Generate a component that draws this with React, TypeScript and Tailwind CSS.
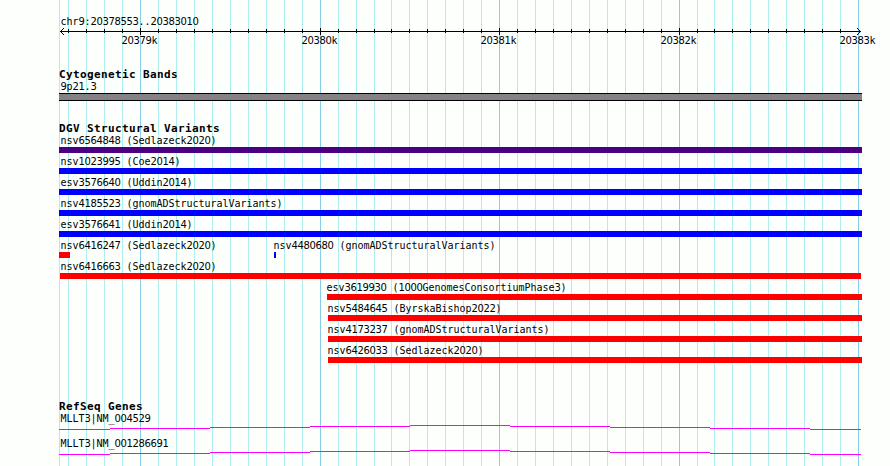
import React from "react";

const MAJOR = [140, 320, 499, 679, 858];
const MINOR = [
  68, 86, 104, 122, 158, 176, 194, 212, 230, 248, 266, 284, 302, 338, 356, 374,
  391, 409, 427, 445, 463, 481, 517, 535, 553, 571, 589, 607, 625, 643, 661,
  697, 714, 732, 750, 768, 786, 804, 822, 840,
];

type Feature = { label: string; start: number; end: number; color: string; gap?: number };

const VARIANTS: Feature[][] = [
  [{ label: "nsv6564848 (Sedlazeck2020)", start: 59, end: 862, color: "bg-[#4b0082]" }],
  [{ label: "nsv1023995 (Coe2014)", start: 59, end: 862, color: "bg-[#0000ff]" }],
  [{ label: "esv3576640 (Uddin2014)", start: 59, end: 862, color: "bg-[#0000ff]" }],
  [{ label: "nsv4185523 (gnomADStructuralVariants)", start: 59, end: 862, color: "bg-[#0000ff]" }],
  [{ label: "esv3576641 (Uddin2014)", start: 59, end: 862, color: "bg-[#0000ff]" }],
  [
    { label: "nsv6416247 (Sedlazeck2020)", start: 59, end: 70, color: "bg-[#ff0000]" },
    { label: "nsv4480680 (gnomADStructuralVariants)", start: 274, end: 276, color: "bg-[#0000ff]", gap: -0.5 },
  ],
  [{ label: "nsv6416663 (Sedlazeck2020)", start: 60, end: 861, color: "bg-[#ff0000]", gap: 0.5 }],
  [{ label: "esv3619930 (1000GenomesConsortiumPhase3)", start: 327, end: 862, color: "bg-[#ff0000]", gap: -0.5 }],
  [{ label: "nsv5484645 (ByrskaBishop2022)", start: 328, end: 862, color: "bg-[#ff0000]", gap: -0.5 }],
  [{ label: "nsv4173237 (gnomADStructuralVariants)", start: 328, end: 862, color: "bg-[#ff0000]", gap: -0.5 }],
  [{ label: "nsv6426033 (Sedlazeck2020)", start: 328, end: 862, color: "bg-[#ff0000]", gap: -0.5 }],
];

/* Digits are set in the plain sans so that zeros carry no inner dot. */
function Label({ text }: { text: string }) {
  return (
    <span className="block h-3 whitespace-pre font-['DejaVu_Sans_Mono',monospace] text-[10px] leading-3 tracking-[-0.02px] text-black">
      {text.split(/(\d+)/).map((part, i) =>
        i % 2 ? (
          <span key={i} className="font-['DejaVu_Sans',sans-serif] tracking-[-0.362px]">
            {part}
          </span>
        ) : (
          part
        ),
      )}
    </span>
  );
}

function Heading({ children }: { children: string }) {
  return (
    <h2 className="h-[13px] whitespace-pre font-['DejaVu_Sans_Mono',monospace] text-[11px] leading-[13px] font-bold tracking-[0.378px] text-black">
      {children}
    </h2>
  );
}

function GridLines() {
  return (
    <svg className="absolute inset-0" width="890" height="466" shapeRendering="crispEdges">
      {[59, ...MINOR].map((x) => (
        <rect key={x} x={x} y="0" width="1" height="466" fill="#afeeee" />
      ))}
      {MAJOR.map((x) => (
        <rect key={x} x={x} y="0" width="1" height="466" fill="#87ceeb" />
      ))}
    </svg>
  );
}

function Ruler() {
  return (
    <svg className="block" width="831" height="8" viewBox="59 28 831 8" shapeRendering="crispEdges">
      <rect x="60" y="31" width="801" height="1" />
      {MINOR.map((x) => (
        <rect key={x} x={x} y="29" width="1" height="4" />
      ))}
      {MAJOR.slice(0, 4).map((x) => (
        <rect key={x} x={x} y="28" width="1" height="7" />
      ))}
      {[1, 2, 3].map((d) => (
        <g key={d}>
          <rect x={60 + d} y={31 - d} width="1" height="1" />
          <rect x={60 + d} y={31 + d} width="1" height="1" />
          <rect x={860 - d} y={31 - d} width="1" height="1" />
          <rect x={860 - d} y={31 + d} width="1" height="1" />
        </g>
      ))}
    </svg>
  );
}

function Gene({ label }: { label: string }) {
  const steps = [59, 110, 210, 310, 410, 510, 610, 710, 810, 861];
  const rises = [4, 3, 2, 1, 0, 1, 2, 3, 4];
  return (
    <div className="h-[25px]">
      <div className="pl-[1.5px]">
        <Label text={label} />
      </div>
      <svg className="block" width="831" height="5" viewBox="59 0 831 5" shapeRendering="crispEdges">
        {rises.map((y, i) => (
          <rect key={i} x={steps[i]} y={y} width={steps[i + 1] - steps[i]} height="1" fill="#ff00ff" />
        ))}
      </svg>
    </div>
  );
}

function VariantRow({ features }: { features: Feature[] }) {
  return (
    <div className="grid h-[21px] pt-[3px]">
      {features.map((f) => (
        <div key={f.label} className="col-start-1 row-start-1" style={{ marginLeft: f.start - 59 }}>
          <div style={{ marginLeft: f.gap ?? 1.5 }}>
            <Label text={f.label} />
          </div>
          <div className={`h-[6px] ${f.color}`} style={{ width: f.end - f.start }} />
        </div>
      ))}
    </div>
  );
}

export default function App() {
  return (
    <main className="relative h-[466px] w-[890px] overflow-hidden bg-[#fdfffc]">
      <GridLines />
      <div className="relative flex flex-col pt-4 pl-[59px]">
        <section className="h-[52px]">
          <div className="pl-[1.5px]">
            <Label text="chr9:20378553..20383010" />
          </div>
          <Ruler />
          <div className="-mt-px flex pl-[62.5px]">
            {["20379k", "20380k", "20381k", "20382k", "20383k"].map((t, i) => (
              <div key={t} className={i === 4 ? "w-10" : i % 2 ? "w-[179px]" : "w-[180px]"}>
                <Label text={t} />
              </div>
            ))}
          </div>
        </section>

        <section className="h-[54px]">
          <Heading>Cytogenetic Bands</Heading>
          <div className="pl-[1.5px]">
            <Label text="9p21.3" />
          </div>
          <div className="h-2 w-[803px] border-y border-black bg-[#848284]" />
        </section>

        <section className="h-[278px]">
          <Heading>DGV Structural Variants</Heading>
          <div className="-mt-[3px]">
            {VARIANTS.map((row) => (
              <VariantRow key={row[0].label} features={row} />
            ))}
          </div>
        </section>

        <section>
          <Heading>RefSeq Genes</Heading>
          <Gene label="MLLT3|NM_004529" />
          <Gene label="MLLT3|NM_001286691" />
        </section>
      </div>
    </main>
  );
}
